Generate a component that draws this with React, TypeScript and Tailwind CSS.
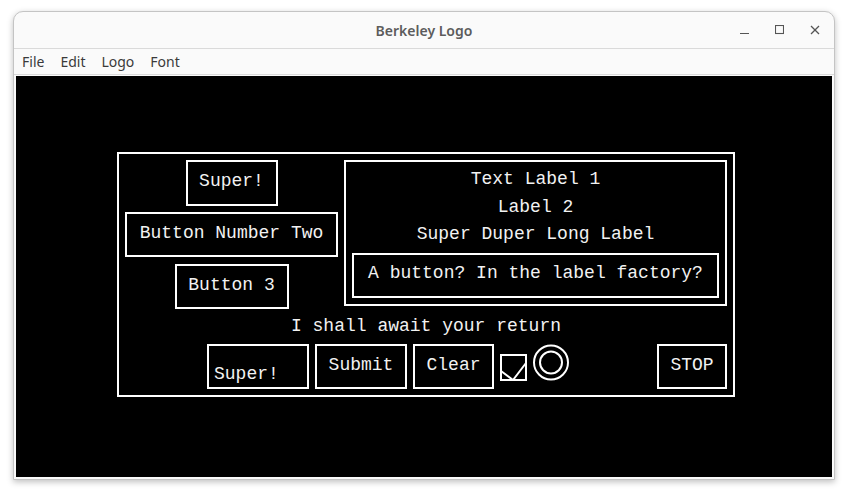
import { ReactElement, ReactNode } from "react"

const mono = { fontFamily: '"Liberation Mono", "Courier New", monospace' }
const ui = { fontFamily: '"Noto Sans", "Open Sans", sans-serif' }

type BoxProps = { w: string; h: string; children: ReactNode; className?: string }

const LogoButton = ({ w, h, children, className = "" }: BoxProps): ReactElement => (
  <div className={`flex shrink-0 items-center justify-center border-2 border-white pb-[4px] leading-[20px] ${w} ${h} ${className}`}>
    {children}
  </div>
)

const CheckBox = (): ReactElement => (
  <svg width="27" height="27" viewBox="0 0 27 27" className="mt-[10px] shrink-0">
    <rect x="1" y="1" width="25" height="25" fill="none" stroke="white" strokeWidth="2" />
    <polyline points="1,17 13,26 26,9" fill="none" stroke="white" strokeWidth="2" />
  </svg>
)

const Radio = (): ReactElement => (
  <svg width="36" height="38" viewBox="0 0 36 38" className="shrink-0">
    <circle cx="18" cy="18.5" r="17" fill="none" stroke="white" strokeWidth="2" />
    <circle cx="18" cy="18.5" r="11" fill="none" stroke="white" strokeWidth="2" />
  </svg>
)

const TitleBar = (): ReactElement => (
  <div className="relative flex h-[37px] items-center justify-center border-b border-[#dadada]">
    <span className="text-[14px] font-semibold text-[#5c5c5c]" style={ui}>Berkeley Logo</span>
    <div className="absolute right-[14px] top-0 flex h-full items-center gap-[26px] text-[#555]">
      <svg width="9" height="10" viewBox="0 0 9 10"><line x1="0" y1="8.5" x2="9" y2="8.5" stroke="#555" strokeWidth="1.2" /></svg>
      <svg width="9" height="10" viewBox="0 0 9 10"><rect x="0.5" y="0.5" width="8" height="8" fill="none" stroke="#555" strokeWidth="1.1" /></svg>
      <svg width="10" height="10" viewBox="0 0 10 10">
        <line x1="1" y1="1" x2="9" y2="9" stroke="#555" strokeWidth="1.3" />
        <line x1="9" y1="1" x2="1" y2="9" stroke="#555" strokeWidth="1.3" />
      </svg>
    </div>
  </div>
)

const MenuBar = (): ReactElement => (
  <div className="flex h-[26px] items-center gap-[16px] border-b border-[#dadada] pl-[8px] text-[14px] text-[#3a3a3a]" style={ui}>
    <span>File</span>
    <span>Edit</span>
    <span>Logo</span>
    <span>Font</span>
  </div>
)

const App = (): ReactElement => {
  return (
    <div className="min-h-[496px] bg-white pl-[13px] pt-[11px]">
      <div className="flex h-[469px] w-[822px] flex-col overflow-hidden rounded-t-[10px] border border-[#c4c4c4] bg-[#fafafa] shadow-[0_2px_6px_rgba(0,0,0,0.25)]">
        <TitleBar />
        <MenuBar />
        <div className="flex-1 px-[2px] pb-[2px] pt-[1px]">
          <div className="h-full bg-black pl-[101px] pt-[76px] text-[18px] text-[#f2f2f2]" style={mono}>
            <div className="flex w-[618px] flex-col border-2 border-white px-[6px] pb-[6px] pt-[6px]">
              <div className="flex items-start gap-[6px]">
                <div className="flex w-[213px] flex-col items-center">
                  <LogoButton w="w-[92px]" h="h-[46px]">Super!</LogoButton>
                  <LogoButton w="w-[213px]" h="h-[45px]" className="mt-[6px]">Button Number Two</LogoButton>
                  <LogoButton w="w-[114px]" h="h-[45px]" className="mt-[7px]">Button 3</LogoButton>
                </div>
                <div className="flex w-[383px] flex-col items-center border-2 border-white px-[6px] pb-[6px] pt-[4px]">
                  <div className="leading-[27.5px]">Text Label 1</div>
                  <div className="leading-[27.5px]">Label 2</div>
                  <div className="leading-[27.5px]">Super Duper Long Label</div>
                  <LogoButton w="w-[367px]" h="h-[45px]" className="mt-[4px]">A button? In the label factory?</LogoButton>
                </div>
              </div>
              <div className="h-[35px] text-center leading-[35px]">I shall await your return</div>
              <div className="flex items-start gap-[6px] pl-[82px]">
                <div className="flex h-[45px] w-[102px] shrink-0 items-end border-2 border-white pb-[3px] pl-[5px] leading-[20px]">Super!</div>
                <LogoButton w="w-[92px]" h="h-[45px]">Submit</LogoButton>
                <LogoButton w="w-[81px]" h="h-[45px]">Clear</LogoButton>
                <CheckBox />
                <Radio />
                <LogoButton w="w-[70px]" h="h-[45px]" className="ml-auto">STOP</LogoButton>
              </div>
            </div>
          </div>
        </div>
      </div>
    </div>
  )
}
export default App
